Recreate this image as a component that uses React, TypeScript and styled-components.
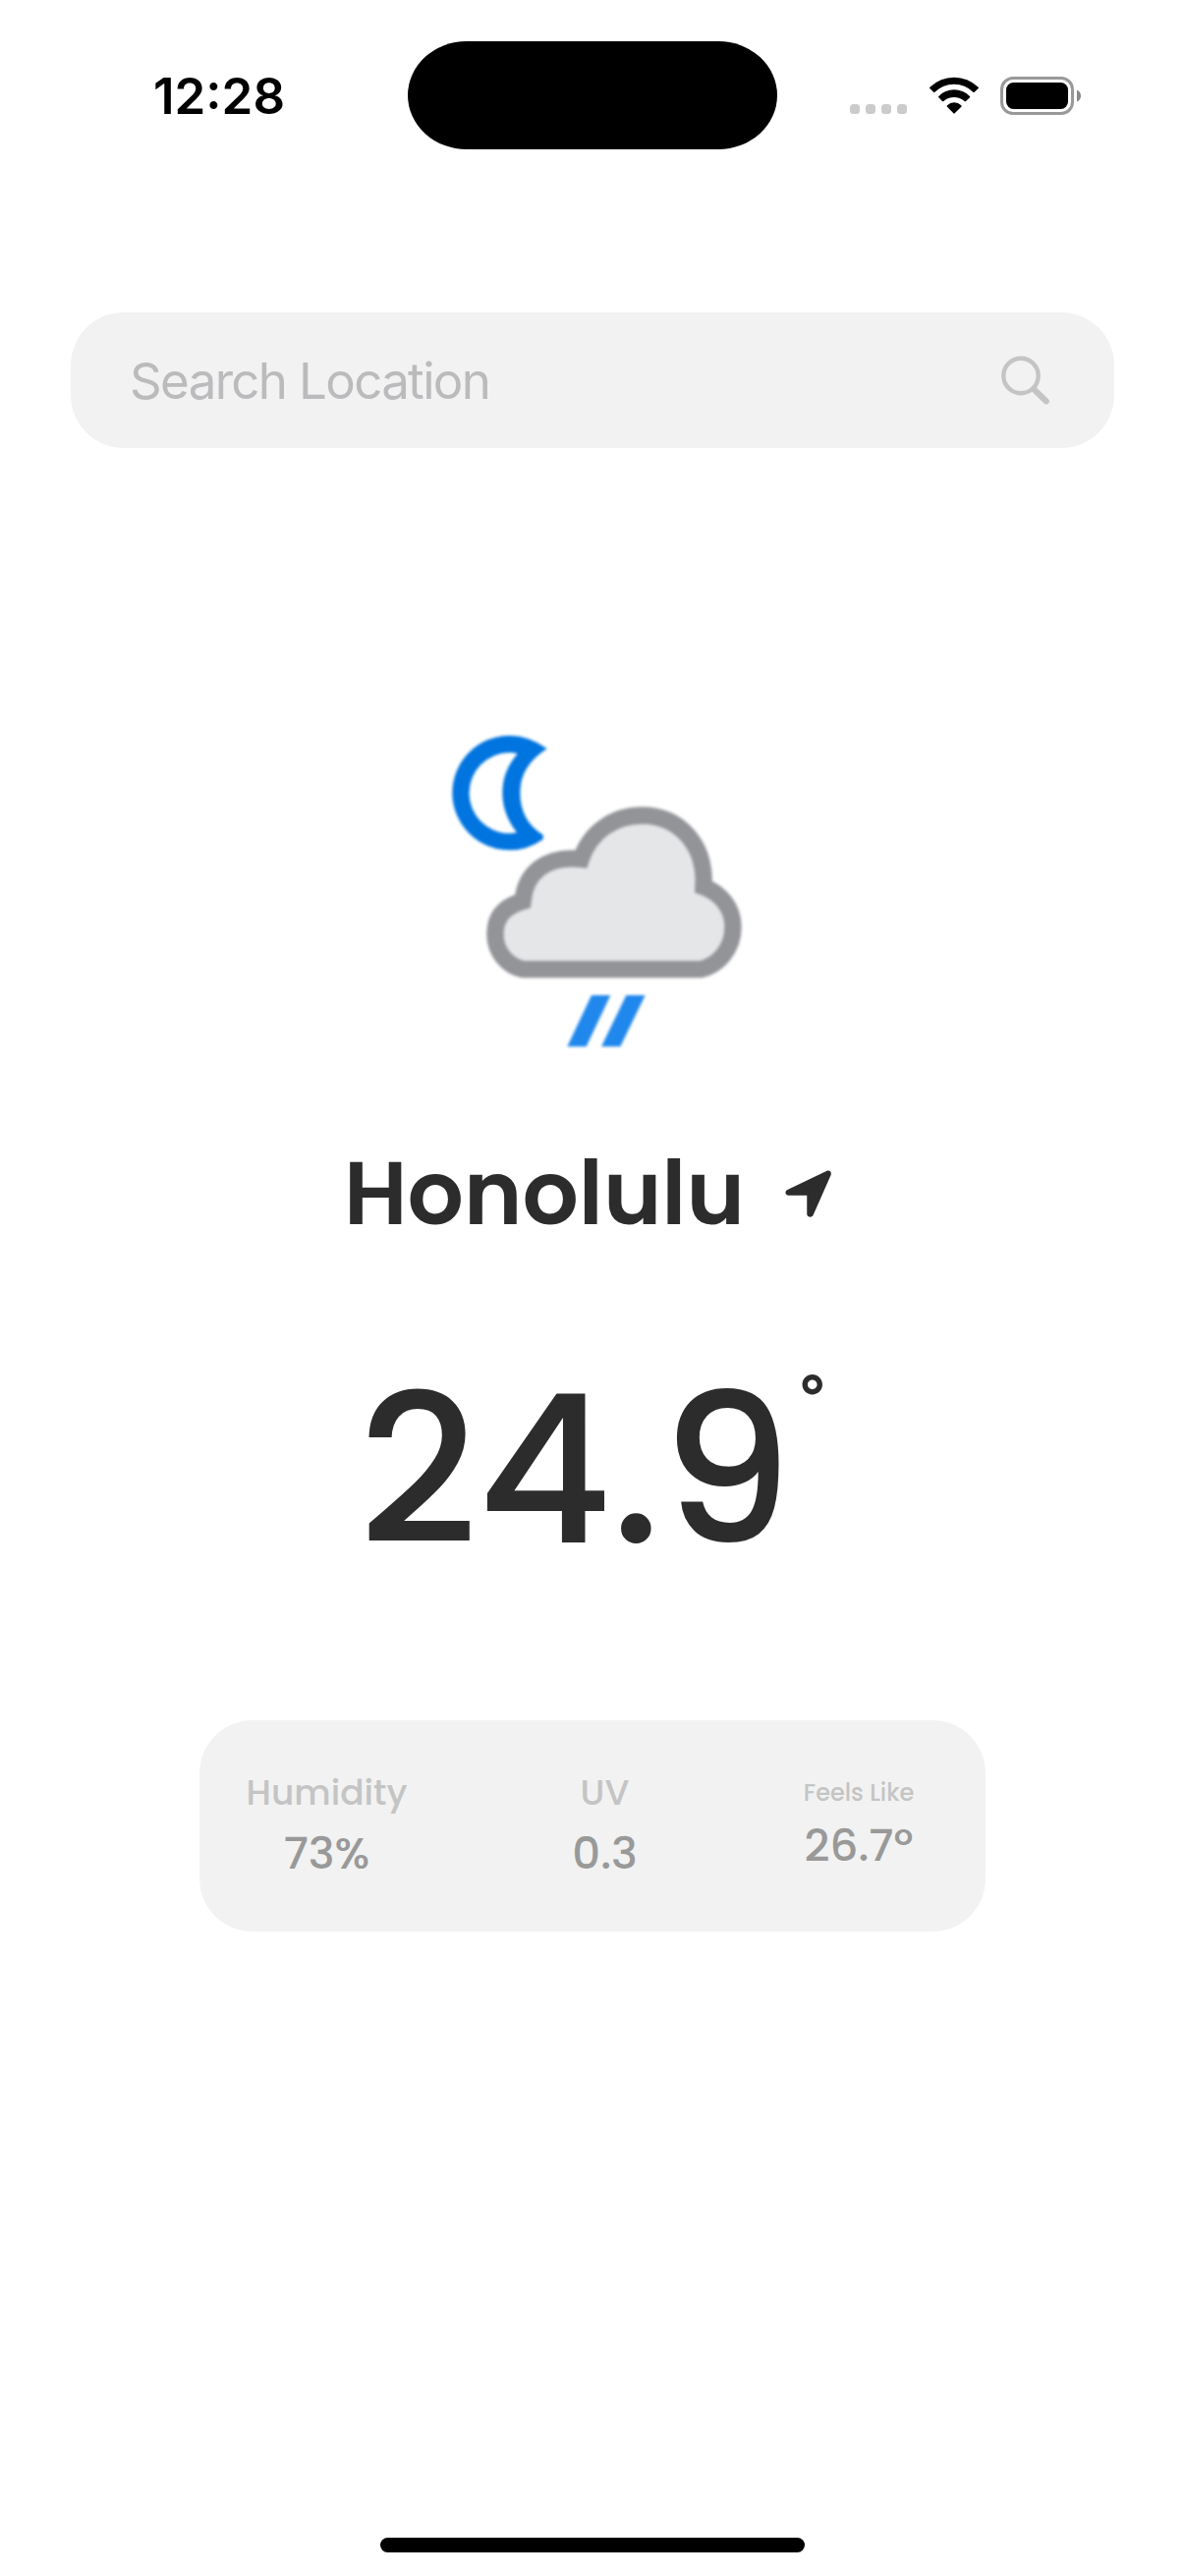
import React from "react";
import styled, { createGlobalStyle } from "styled-components";

const GlobalStyle = createGlobalStyle`
  * { box-sizing: border-box; }
  html, body { margin: 0; padding: 0; background: #fff; }
`;

const Screen = styled.main`
  width: 1206px;
  height: 2622px;
  display: flex;
  flex-direction: column;
  align-items: center;
  background: #fff;
  color: #2c2c2c;
  font-family: "Poppins", "Inter", "Liberation Sans", sans-serif;
  overflow: hidden;
`;

const StatusBar = styled.header`
  width: 100%;
  height: 195px;
  flex: none;
  display: grid;
  grid-template-columns: 415px 376px 415px;
  align-items: start;
  color: #000;
`;

const Clock = styled.time`
  padding: 68px 0 0 156px;
  font: 600 51px/60px "Inter", sans-serif;
  letter-spacing: 0;
  white-space: nowrap;
`;

const Island = styled.div`
  height: 110px;
  margin-top: 42px;
  border-radius: 60px / 55px;
  background: #000;
`;

const StatusIcons = styled.div`
  height: 40px;
  margin-top: 78px;
  padding-left: 74px;
  display: flex;
  align-items: flex-start;
`;

const SignalDots = styled.div`
  display: flex;
  gap: 6px;
  margin: 28px 22px 0 0;
`;

const Dot = styled.i`
  width: 10px;
  height: 10px;
  border-radius: 3.5px;
  background: #cbcbcb;
`;

const Battery = styled.svg`
  margin-left: 21px;
`;

const SearchBar = styled.label`
  width: 1062px;
  height: 138px;
  flex: none;
  margin-top: 123px;
  padding: 0 65px 0 60px;
  display: flex;
  align-items: center;
  justify-content: space-between;
  border-radius: 54px;
  background: #f2f2f2;
`;

const Placeholder = styled.span`
  padding-top: 2px;
  font: 400 51px/60px "Inter", sans-serif;
  letter-spacing: -1.65px;
  color: #bbbbbd;
  white-space: nowrap;
`;

const WeatherIcon = styled.svg`
  display: block;
  flex: none;
  margin: 264px 0 0 4px;
  filter: blur(1.4px);
`;

const CityRow = styled.section`
  flex: none;
  height: 100px;
  margin-top: 75px;
  display: flex;
  align-items: center;
  width: 864px;
  padding-left: 175px;
`;

const City = styled.h1`
  flex: none;
  margin: 0;
  width: 453px;
  padding: 0 0 0 4px;
  font-size: 90px;
  line-height: 100px;
  font-weight: 600;
  white-space: nowrap;
`;

const Temperature = styled.section`
  flex: none;
  width: 864px;
  height: 240px;
  margin-top: 112px;
  padding-left: 194px;
  display: flex;
  align-items: flex-start;
`;

const Degrees = styled.span`
  flex: none;
  width: 448px;
  font-size: 210px;
  line-height: 240px;
  font-weight: 500;
  white-space: nowrap;
`;

const DegreeSign = styled.span`
  padding-top: 14px;
  font-family: "Inter", sans-serif;
  font-size: 60px;
  line-height: 60px;
  font-weight: 600;
`;

const Details = styled.section`
  flex: none;
  width: 800px;
  height: 215px;
  margin-top: 134px;
  padding: 50px 0 0 48.5px;
  display: flex;
  gap: 169px;
  border-radius: 54px;
  background: #f2f2f2;
`;

const Detail = styled.div<{ $width: number }>`
  flex: none;
  width: ${(p) => p.$width}px;
  display: flex;
  flex-direction: column;
  align-items: center;
  white-space: nowrap;
`;

const Label = styled.span<{ $small?: boolean }>`
  height: 48px;
  font-size: ${(p) => (p.$small ? 24 : 36)}px;
  line-height: 48px;
  font-weight: 500;
  color: #c4c4c4;
`;

const Value = styled.span<{ $raised?: boolean }>`
  margin-top: ${(p) => (p.$raised ? 0 : 8)}px;
  font-size: 45px;
  line-height: 60px;
  font-weight: 500;
  color: #999;
`;

const HomeIndicator = styled.div`
  width: 432px;
  height: 15px;
  margin: auto 0 24px;
  border-radius: 8px;
  background: #000;
`;

export default function App() {
  return (
    <Screen>
      <GlobalStyle />
      <StatusBar>
        <Clock>12:28</Clock>
        <Island />
        <StatusIcons>
          <SignalDots>
            <Dot />
            <Dot />
            <Dot />
            <Dot />
          </SignalDots>
          <svg width="52" height="40" viewBox="0 0 156 120">
            <path d="M4 32 Q2 34 4 36 L15 47 Q17 49 19 47 Q44 23 78 23 Q112 23 136 47 Q138 49 140 47 L152 36 Q154 34 152 32 Q120 2 78 2 Q36 2 4 32Z" />
            <path d="M31 60 Q29 62 31 64 L42 75 Q44 77 46 75 Q59 63 78 63 Q96 63 110 75 Q112 77 114 75 L126 64 Q128 62 126 60 Q106 40 78 40 Q50 40 31 60Z" />
            <path d="M57 88 Q55 90 57 92 L76 112 Q78 114 80 112 L100 92 Q102 90 100 88 Q91 79 78 79 Q66 79 57 88Z" />
          </svg>
          <Battery width="84" height="40" viewBox="0 0 84 40">
            <rect x="1.5" y="1.5" width="72" height="36" rx="11.5" fill="none" stroke="#999" strokeWidth="3" />
            <rect x="6" y="6" width="63" height="27" rx="7.5" />
            <path d="M78 13.5 Q82 15.5 82 19.5 Q82 23.5 78 25.5Z" fill="#888" />
          </Battery>
        </StatusIcons>
      </StatusBar>

      <SearchBar>
        <Placeholder>Search Location</Placeholder>
        <svg width="52" height="52" viewBox="0 0 52 52" fill="none" stroke="#c4c4c4">
          <circle cx="22" cy="21.5" r="17.7" strokeWidth="4.4" />
          <path d="M35 35 L47.8 47.5" strokeWidth="6" strokeLinecap="round" />
        </svg>
      </SearchBar>

      <WeatherIcon width="350" height="370" viewBox="0 0 1050 1110">
        <path
          fill="#0074df"
          fillRule="evenodd"
          d="M380 126 Q325 86 266 86 A174 174 0 0 0 266 436 Q320 436 366 404 Q372 398 366 388 Q298 345 298 260 Q298 178 380 126Z M290 142 Q244 195 244 260 Q244 326 288 382 Q278 385 266 385 A122 122 0 0 1 266 138 Q280 138 290 142Z"
        />
        <path
          fill="#e5e6e8"
          stroke="#929498"
          strokeWidth="52"
          d="M308 800 A108 108 0 0 1 222 690 Q222 615 306 592 C314 506 376 452 484 463 C512 380 585 330 670 330 C780 330 866 416 858 548 C912 568 948 614 948 670 C948 740 900 790 848 800Z"
        />
        <path fill="#2087ec" d="M516 879 H574 L500 1036 H442Z M622 879 H680 L604 1036 H546Z" />
      </WeatherIcon>

      <CityRow>
        <City>Honolulu</City>
        <svg width="48" height="48" viewBox="0 0 138 144" preserveAspectRatio="none" fill="#2c2c2c">
          <path d="M121 3 C130 -1 137 6 134 15 L82 138 C77 147 64 143 64 134 V77 H10 C0 77 -2 65 7 60Z" />
        </svg>
      </CityRow>

      <Temperature>
        <Degrees>24.9</Degrees>
        <DegreeSign>°</DegreeSign>
      </Temperature>

      <Details>
        <Detail $width={162}>
          <Label>Humidity</Label>
          <Value>73%</Value>
        </Detail>
        <Detail $width={66}>
          <Label>UV</Label>
          <Value>0.3</Value>
        </Detail>
        <Detail $width={113}>
          <Label $small>Feels Like</Label>
          <Value $raised>26.7º</Value>
        </Detail>
      </Details>

      <HomeIndicator />
    </Screen>
  );
}
